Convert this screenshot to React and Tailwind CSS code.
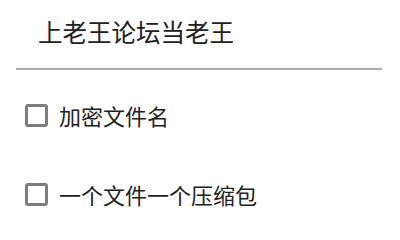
export default function App() {
  const font = { fontFamily: '"Noto Sans CJK SC", "Noto Sans", sans-serif' };
  return (
    <div className="w-[400px] h-[230px] bg-white overflow-hidden text-[#212121]" style={font}>
      <div className="h-[64px] flex items-center pl-[38px] text-[24.5px] leading-none">
        上老王论坛当老王
      </div>
      <div className="mt-[4px] ml-[16px] w-[366px] h-[1.5px] bg-[#ababab]" />
      <div className="mt-[6px] flex flex-col">
        {["加密文件名", "一个文件一个压缩包"].map((t) => (
          <div key={t} className="h-[79px] flex items-center pl-[25px]">
            <div className="w-[23px] h-[23px] border-[3px] border-[#7d7d7d] rounded-[3px] shrink-0" />
            <span className="ml-[11px] text-[22px] leading-none">{t}</span>
          </div>
        ))}
      </div>
    </div>
  );
}
